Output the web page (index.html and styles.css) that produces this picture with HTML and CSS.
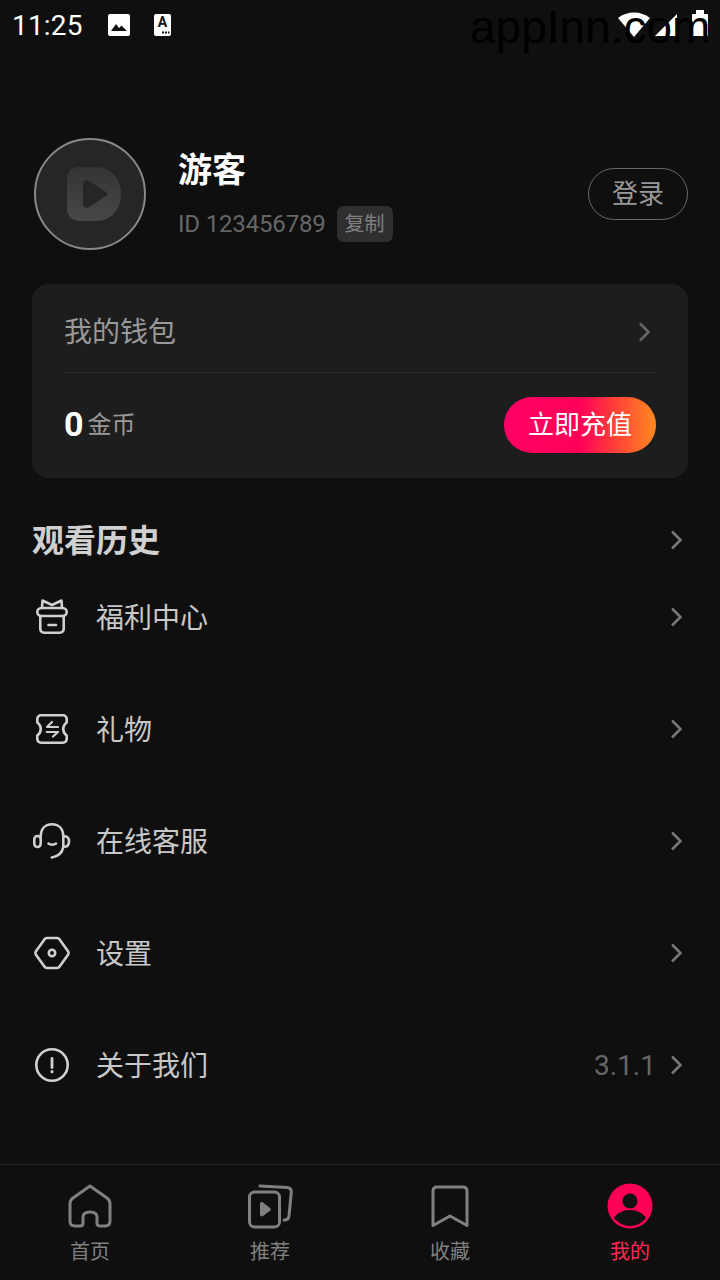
FILE: index.html
```html
<!DOCTYPE html>
<html lang="zh-CN">
<head>
  <meta charset="UTF-8" />
  <meta name="viewport" content="width=device-width, initial-scale=1">
  <title>我的</title>
  <link rel="stylesheet" href="styles.css">
</head>
<body>
  <div class="page">

    <div class="statusbar">
      <span class="clock">11:25</span>
      <svg class="st-photo" width="22" height="22" viewBox="0 0 22 22"><rect width="22" height="22" rx="2" fill="#fff"/><path d="M3 17l5-7 3 4 2.500-2.500 5.500 5.500z" fill="#111"/></svg>
      <svg class="st-card" width="19" height="22" viewBox="0 0 19 22">
        <rect x="1" width="17" height="22" rx="2" fill="#fff"/>
        <text x="9.500" y="13" text-anchor="middle" class="st-a">A</text>
        <path d="M9 17.500h2v2H9zM12 17.500h2v2h-2zM15 17.500h1.500v2H15z" fill="#111"/>
      </svg>
      <svg class="st-icons" width="92" height="28" viewBox="0 0 92 28">
        <path d="M0 8a26 26 0 0 1 32 0L16 27z" fill="#fff"/>
        <path d="M37 26L59 4v22z" fill="#fff"/>
        <rect x="74" y="4" width="16" height="22" rx="1" fill="#fff"/>
        <rect x="78" y="0" width="8" height="5" fill="#fff"/>
      </svg>
      <span class="watermark">appInn.com</span>
    </div>

    <section class="profile">
      <div class="avatar">
        <svg width="56" height="56" viewBox="0 0 56 56">
          <defs><linearGradient id="logoFill" x1="0" y1="0" x2="0" y2="1"><stop offset="0" stop-color="#343434"/><stop offset="1" stop-color="#484848"/></linearGradient></defs>
          <path d="M12 1h18c14 0 25 11 25 27s-11 27-25 27H14C6 55 1 50 1 43V12C1 6 6 1 12 1z" fill="url(#logoFill)"/>
          <path d="M17 18c0-3 3-5 6-3l17 11c2 1 2 3 0 4L23 41c-3 2-6 0-6-3z" fill="#262627"/>
        </svg>
      </div>
      <div class="who">
        <div class="name">游客</div>
        <div class="idline"><span class="uid">ID 123456789</span><span class="copy">复制</span></div>
      </div>
      <button class="login">登录</button>
    </section>

    <section class="wallet">
      <div class="wallet-top">
        <span class="wallet-title">我的钱包</span>
        <svg class="chev" width="16" height="24" viewBox="0 0 16 24"><path d="M4 3.500l8.500 8.500L4 20.500" fill="none" stroke="#666" stroke-width="2.600"/></svg>
      </div>
      <div class="wallet-bottom">
        <span class="coins"><b>0</b><span>金币</span></span>
        <button class="topup">立即充值</button>
      </div>
    </section>

    <div class="history">
      <h2>观看历史</h2>
      <svg class="chev" width="16" height="24" viewBox="0 0 16 24"><path d="M4 3.500l8.500 8.500L4 20.500" fill="none" stroke="#777" stroke-width="2.600"/></svg>
    </div>

    <ul class="menu">
      <li>
        <svg class="ico" width="40" height="40" viewBox="0 0 40 40" fill="none" stroke="#d0d0d0" stroke-width="2.600" stroke-linejoin="round" stroke-linecap="round">
          <path d="M10 11l.5-7.500L20 8l9.500-4.500.5 7.500"/>
          <rect x="5.300" y="11" width="29.400" height="8" rx="4"/>
          <path d="M8.300 19v13a3.700 3.700 0 0 0 3.700 3.700h16a3.700 3.700 0 0 0 3.700-3.700V19M16.500 28h7.500"/>
        </svg>
        <span class="label">福利中心</span>
        <svg class="chev" width="16" height="24" viewBox="0 0 16 24"><path d="M4 3.500l8.500 8.500L4 20.500" fill="none" stroke="#777" stroke-width="2.600"/></svg>
      </li>
      <li>
        <svg class="ico" width="40" height="40" viewBox="0 0 40 40" fill="none" stroke="#d0d0d0" stroke-width="2.600" stroke-linejoin="round" stroke-linecap="round">
          <path d="M9 6.300h22a3.700 3.700 0 0 1 3.700 3.700v3.500c-2 1.500-3.500 3.500-3.500 6.500s1.500 5 3.500 6.500V30a3.700 3.700 0 0 1-3.700 3.700H9A3.700 3.700 0 0 1 5.300 30v-3.500c2-1.500 3.500-3.500 3.500-6.500s-1.500-5-3.500-6.500V10A3.700 3.700 0 0 1 9 6.300z"/>
          <path d="M26 18H15l5-5M14.700 23H26l-5 4.500" stroke-width="2.200"/>
        </svg>
        <span class="label">礼物</span>
        <svg class="chev" width="16" height="24" viewBox="0 0 16 24"><path d="M4 3.500l8.500 8.500L4 20.500" fill="none" stroke="#777" stroke-width="2.600"/></svg>
      </li>
      <li>
        <svg class="ico" width="40" height="40" viewBox="0 0 40 40" fill="none" stroke="#d0d0d0" stroke-width="2.600" stroke-linecap="round">
          <path d="M8.700 16C8.700 8 13 3.300 20 3.300S31.300 8 31.300 16"/>
          <rect x="2.300" y="15" width="6.400" height="11" rx="3.200"/>
          <path d="M31.300 15c3.700 0 5.700 2 5.700 5.500s-2 5.500-5.700 5.500z"/>
          <path d="M31.300 26c-1 5.500-5.500 9.500-11.500 10.500M16.500 22.500c2 1.500 5.500 1.500 7.500 0"/>
        </svg>
        <span class="label">在线客服</span>
        <svg class="chev" width="16" height="24" viewBox="0 0 16 24"><path d="M4 3.500l8.500 8.500L4 20.500" fill="none" stroke="#777" stroke-width="2.600"/></svg>
      </li>
      <li>
        <svg class="ico" width="40" height="40" viewBox="0 0 40 40" fill="none" stroke="#d0d0d0" stroke-width="2.600" stroke-linejoin="round">
          <path d="M15 5h10a3 3 0 0 1 2.600 1.500l8.600 12a3 3 0 0 1 0 3l-8.600 12A3 3 0 0 1 25 35H15a3 3 0 0 1-2.600-1.500l-8.600-12a3 3 0 0 1 0-3l8.600-12A3 3 0 0 1 15 5z"/>
          <circle cx="20" cy="20" r="3.200"/>
        </svg>
        <span class="label">设置</span>
        <svg class="chev" width="16" height="24" viewBox="0 0 16 24"><path d="M4 3.500l8.500 8.500L4 20.500" fill="none" stroke="#777" stroke-width="2.600"/></svg>
      </li>
      <li>
        <svg class="ico" width="40" height="40" viewBox="0 0 40 40" fill="none" stroke="#d0d0d0" stroke-width="2.600" stroke-linecap="round">
          <circle cx="20" cy="20" r="15.700"/>
          <path d="M20 13.500v9" stroke-width="2.800"/>
          <path d="M20 26.500v.2" stroke-width="3"/>
        </svg>
        <span class="label">关于我们</span>
        <span class="version">3.1.1</span>
        <svg class="chev" width="16" height="24" viewBox="0 0 16 24"><path d="M4 3.500l8.500 8.500L4 20.500" fill="none" stroke="#777" stroke-width="2.600"/></svg>
      </li>
    </ul>

    <nav class="tabbar">
      <a class="tab">
        <svg width="48" height="48" viewBox="0 0 48 48" fill="none" stroke="#808080" stroke-width="3" stroke-linejoin="round">
          <path d="M24 4L7 16Q4 18 4 22V39Q4 44 9 44H14Q17 44 17 41V35Q17 30 24 30Q31 30 31 35V41Q31 44 34 44H39Q44 44 44 39V22Q44 18 41 16Z"/>
        </svg>
        <span>首页</span>
      </a>
      <a class="tab">
        <svg width="48" height="48" viewBox="0 0 48 48" fill="none" stroke="#808080" stroke-width="3" stroke-linejoin="round" stroke-linecap="round">
          <rect x="3.500" y="10" width="30" height="35" rx="5"/>
          <path d="M14 4l27 1.500c3 .2 4.500 2 4.300 4.500L43 34c-.3 2.500-2 4-5 4"/>
          <path d="M14 22c0-2 1.500-2.500 3-1.500l7 5.500c1 .8 1 2 0 2.800l-7 5.200c-1.500 1-3 .5-3-1.500z" fill="#808080" stroke="none"/>
        </svg>
        <span>推荐</span>
      </a>
      <a class="tab">
        <svg width="48" height="48" viewBox="0 0 48 48" fill="none" stroke="#808080" stroke-width="3" stroke-linejoin="round" stroke-linecap="round">
          <path d="M11 5h26c2.500 0 4 1.500 4 4v34.500L24 34 7 43.500V9c0-2.500 1.500-4 4-4z"/>
        </svg>
        <span>收藏</span>
      </a>
      <a class="tab active">
        <svg width="48" height="48" viewBox="0 0 48 48">
          <circle cx="24" cy="24" r="22.500" fill="#ff0058"/>
          <circle cx="24" cy="19" r="7.500" fill="#111"/>
          <path d="M8 36c3-5 9-8 16-8s13 3 16 8c-4 5-10 8-16 8s-12-3-16-8z" fill="#111"/>
        </svg>
        <span>我的</span>
      </a>
    </nav>
  </div>
</body>
</html>
```

FILE: styles.css
```css
* {
  box-sizing: border-box;
}
body {
  margin: 0;
  background: #0f0f0f;
  font-family: "Roboto", "Noto Sans CJK SC", sans-serif;
  color: #d0d0d0;
}
.page {
  width: 720px;
  height: 1280px;
  display: flex;
  flex-direction: column;
  overflow: hidden;
}

/* status bar */
.statusbar {
  height: 50px;
  display: flex;
  align-items: center;
  padding: 0 10px 0 12px;
  color: #fff;
  position: relative;
}
.clock {
  font-size: 28px;
  width: 96px;
  letter-spacing: 0.2px;
}
.st-photo {
  margin-right: 23px;
}
.st-a {
  font: bold 14px "Roboto", sans-serif;
  fill: #111;
}
.st-icons {
  position: absolute;
  left: 618px;
  top: 10px;
}
.watermark {
  position: absolute;
  left: 470px;
  top: 0;
  font: 46px "Liberation Sans", sans-serif;
  color: #000;
}

/* profile */
.profile {
  display: flex;
  align-items: center;
  margin-top: 88px;
  padding: 0 32px 0 34px;
  height: 112px;
}
.avatar {
  width: 112px;
  height: 112px;
  border-radius: 50%;
  background: #262627;
  border: 2px solid #888;
  padding-left: 7px;
  display: flex;
  align-items: center;
  justify-content: center;
  flex: none;
}
.who {
  margin-left: 32px;
  padding-top: 3px;
  flex: 1;
}
.name {
  font-size: 34px;
  font-weight: 700;
  color: #fff;
  line-height: 40px;
}
.idline {
  display: flex;
  align-items: center;
  margin-top: 16px;
}
.uid {
  font-size: 24px;
  color: #666;
  letter-spacing: -0.17px;
}
.copy {
  margin-left: 11px;
  background: #2f2f2f;
  color: #808080;
  font-size: 20px;
  padding: 0 8px;
  height: 36px;
  line-height: 36px;
  border-radius: 7px;
}
.login {
  width: 100px;
  height: 52px;
  border: 1px solid #666;
  border-radius: 26px;
  background: none;
  color: #999;
  font: 26px "Noto Sans CJK SC", sans-serif;
  padding: 0 0 6px;
}

/* wallet */
.wallet {
  margin: 34px 32px 0;
  height: 194px;
  background: #1d1d1d;
  border-radius: 16px;
  padding: 0 32px;
}
.wallet-top {
  height: 89px;
  display: flex;
  align-items: center;
  justify-content: space-between;
  border-bottom: 1px solid #2b2b2b;
  font-size: 28px;
  color: #999;
  padding-top: 8px;
}
.wallet-title {
  padding-bottom: 4px;
}
.chev {
  flex: none;
  margin-right: 4px;
}
.wallet-bottom {
  height: 104px;
  display: flex;
  align-items: center;
  justify-content: space-between;
}
.coins {
  display: flex;
  align-items: center;
  font-size: 24px;
  color: #999;
}
.coins b {
  font-size: 34px;
  color: #fff;
  margin-right: 4px;
  padding-bottom: 2px;
}
.coins span {
  padding-bottom: 6px;
}
.topup {
  width: 152px;
  height: 56px;
  border: 0;
  border-radius: 28px;
  padding: 0 0 6px;
  color: #fff;
  font: 26px "Noto Sans CJK SC", sans-serif;
  background: linear-gradient(90deg, #ff0064 0%, #ff0058 50%, #ff3d38 72%, #ff8a20 100%);
}

/* history heading */
.history {
  display: flex;
  align-items: center;
  justify-content: space-between;
  margin-top: 40px;
  padding: 0 32px;
  height: 44px;
}
.history h2 {
  margin: 0;
  padding-bottom: 4px;
  font-size: 32px;
  font-weight: 700;
  color: #d0d0d0;
}

/* menu */
.menu {
  list-style: none;
  margin: -1px 0 0;
  padding: 0 32px;
  flex: 1;
}
.menu li {
  height: 112px;
  display: flex;
  align-items: center;
  font-size: 28px;
  color: #c8c8c8;
}
.ico {
  flex: none;
}
.label {
  flex: 1;
  margin-left: 24px;
  padding-bottom: 2px;
}
.version {
  color: #666;
  font-size: 28px;
  margin-right: 12px;
}

/* bottom tabs */
.tabbar {
  height: 116px;
  border-top: 1px solid #262626;
  display: flex;
  flex: none;
}
.tab {
  flex: 1;
  display: flex;
  flex-direction: column;
  align-items: center;
  padding-top: 17px;
  color: #808080;
  font-size: 20px;
}
.tab span {
  margin-top: 6px;
}
.tab.active {
  color: #ff2a55;
}
```
